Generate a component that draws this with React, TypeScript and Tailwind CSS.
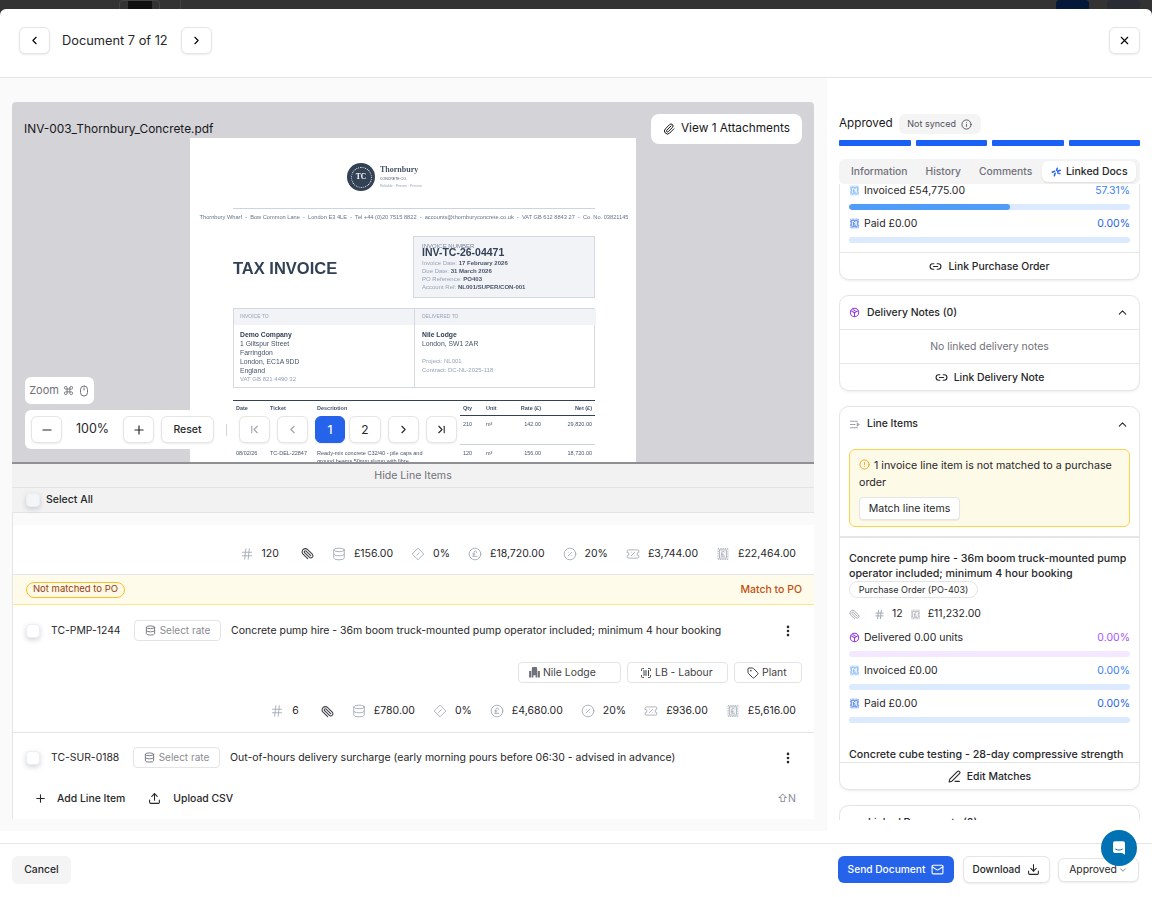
import React from 'react';
import {
  ChevronDown,
  ChevronFirst,
  ChevronLast,
  ChevronLeft,
  ChevronRight,
  ChevronUp,
  CircleAlert,
  CirclePercent,
  CirclePoundSterling,
  Command,
  Database,
  Download,
  EllipsisVertical,
  Hash,
  Info,
  Link2,
  Mail,
  Minus,
  Mouse,
  Paperclip,
  PenLine,
  Plus,
  ScanBarcode,
  Tag,
  TicketPercent,
  Upload,
  X,
} from 'lucide-react';

type IconProps = { className?: string };

// Stamp-edged invoice icon used for totals and invoiced/paid rows
const StampPound: React.FC<IconProps> = ({ className }) => (
  <svg viewBox="0 0 24 24" fill="none" stroke="currentColor" strokeWidth="1.7" className={className}>
    <rect x="3.5" y="2.5" width="17" height="19" strokeDasharray="1.6 1.4" fill="currentColor" fillOpacity="0.12" />
    <rect x="6" y="5" width="12" height="14" strokeWidth="1.2" />
    <path d="M14.5 9a2.3 2.3 0 0 0-4.4 0.6V15.5M8.8 12.5h4.2M8.8 15.8h6.4" strokeWidth="1.3" />
  </svg>
);

const RoundBox: React.FC<IconProps> = ({ className }) => (
  <svg viewBox="0 0 24 24" fill="none" stroke="currentColor" strokeWidth="2.200" className={className}>
    <circle cx="12" cy="12" r="9.2" />
    <path d="M12 12.5v8.7M12 12.5l7.8-4.6M12 12.5 4.2 7.900M7.800 5.200l8.200 4.900" />
  </svg>
);

const DiamondPct: React.FC<IconProps> = ({ className }) => (
  <svg viewBox="0 0 24 24" fill="none" stroke="currentColor" strokeWidth="1.6" className={className}>
    <path d="M12 2 22 12 12 22 2 12Z" strokeLinejoin="round" />
    <path d="M14.500 9.500l-5 5M9.700 9.700h.01M14.300 14.300h.01" />
  </svg>
);

const LinesArrow: React.FC<IconProps> = ({ className }) => (
  <svg viewBox="0 0 24 24" fill="none" stroke="currentColor" strokeWidth="2.200" className={className}>
    <path d="M2 5h17M2 12h12M2 19h17M18 9l4 3-4 3Z" />
  </svg>
);

const LinkedSpark: React.FC<IconProps> = ({ className }) => (
  <svg viewBox="0 0 24 24" fill="none" stroke="currentColor" strokeWidth="3.600" strokeLinecap="round" className={className}>
    <path d="M15 3l-1.500 5M22 8l-6 2M9 10l-6 2.500M10 15l-2 6M16 14l5 2" />
  </svg>
);

const BuildingFill: React.FC<IconProps> = ({ className }) => (
  <svg viewBox="0 0 24 24" fill="currentColor" className={className}>
    <path d="M8 2h8l1 3v16h-3v-4h-4v4H7V5ZM2 9h4v12H2ZM18 9h4v12h-4Z" />
  </svg>
);

const Btn: React.FC<{ className?: string; height?: string; tone?: string; children: React.ReactNode }> = ({
  className,
  height = 'h-[27px]',
  tone = 'border-[#e5e5e5] bg-white',
  children,
}) => (
  <div
    className={`flex items-center justify-center rounded-md border shadow-[0_1px_2px_rgba(0,0,0,0.08)] ${height} ${tone} ${className ?? ''}`}
  >
    {children}
  </div>
);

const Checkbox: React.FC<{ className?: string }> = ({ className }) => (
  <div
    className={`h-[14px] w-[14px] shrink-0 rounded-[4px] border border-[#eceef2] shadow-[0_2px_5px_rgba(100,116,139,0.3)] ${className ?? 'bg-white'}`}
  />
);

type StatItem = { icon: React.FC<IconProps>; text?: string };

const stats = (qty: string, rate: string, net: string, vat: string, gross: string): StatItem[] => [
  { icon: Hash, text: qty },
  { icon: Paperclip },
  { icon: Database, text: rate },
  { icon: DiamondPct, text: '0%' },
  { icon: CirclePoundSterling, text: net },
  { icon: CirclePercent, text: '20%' },
  { icon: TicketPercent, text: vat },
  { icon: StampPound, text: gross },
];

const StatRow: React.FC<{ items: StatItem[] }> = ({ items }) => (
  <div className="flex items-center justify-end gap-[18px] pr-[18px] text-[10.500px] text-[#27272a]">
    {items.map((item, i) => (
      <div key={i} className="flex items-center gap-[8px]">
        <item.icon
          className={
            item.icon === Paperclip
              ? 'ml-[4px] h-[13px] w-[13px] rotate-90 stroke-[2] text-[#3f3f46]'
              : 'h-[14px] w-[14px] stroke-[1.4] text-[#9ca3af]'
          }
        />
        {item.text && <span>{item.text}</span>}
      </div>
    ))}
  </div>
);

const SelectRate: React.FC = () => (
  <div className="flex h-[21px] w-[87px] shrink-0 items-center justify-center gap-[4px] rounded-[4px] border border-[#e4e4e7] text-[10px] text-[#8b8b93]">
    <Database className="h-[11px] w-[11px] text-[#71717a]" />
    Select rate
  </div>
);

const Chip: React.FC<{ className?: string; children: React.ReactNode }> = ({ className, children }) => (
  <div className={`flex h-[21px] items-center rounded-[4px] border border-[#e4e4e7] text-[10.400px] text-[#3f3f46] ${className ?? ''}`}>
    {children}
  </div>
);

const Progress: React.FC<{
  icon: React.ReactNode;
  label: string;
  pct: string;
  pctColor: string;
  track: string;
  fill?: React.ReactNode;
  last?: boolean;
}> = ({ icon, label, pct, pctColor, track, fill, last }) => (
  <div className={last ? '' : 'mb-[5px]'}>
    <div className="flex h-[16px] items-center pt-[1px] text-[10.500px] text-[#27272a]">
      {icon}
      <span className="ml-[4px]">{label}</span>
      <span className={`ml-auto ${pctColor}`}>{pct}</span>
    </div>
    <div className={`mt-[6px] h-[6px] overflow-hidden rounded-full ${track}`}>{fill}</div>
  </div>
);

const invoicedIcon = <StampPound className="h-[11px] w-[11px] text-[#60a5fa]" />;
const paidIcon = <StampPound className="h-[11px] w-[11px] text-[#2563eb]" />;

const CardFooterAction: React.FC<{ icon: React.ReactNode; label: string }> = ({ icon, label }) => (
  <div className="flex h-[27px] items-center justify-center gap-[6px] border-t border-[#e5e5e5] pt-[1px] text-[10.400px] font-medium text-[#27272a]">
    {icon}
    {label}
  </div>
);

const cardClass = 'rounded-[10px] border border-[#e5e5e5] bg-white shadow-[0_1px_3px_rgba(0,0,0,0.08)]';

// Invoice page rendered inside the viewer
const PdfPage: React.FC = () => (
  <div className="h-[324px] w-[446px] shrink-0 overflow-hidden bg-white pt-[25px] pr-[41px] pl-[43px] font-['Liberation_Sans',sans-serif] text-[#475569] blur-[0.25px]">
    <div className="flex h-[28px] pl-[114px]">
      <div className="flex h-[28px] w-[28px] items-center justify-center rounded-full bg-[#334155]">
        <div className="flex h-[21px] w-[21px] items-center justify-center rounded-full border border-dotted border-white font-['Liberation_Serif',serif] text-[7.500px] font-bold text-white">
          TC
        </div>
      </div>
      <div className="ml-[5px] pt-[2px]">
        <div className="font-['Liberation_Serif',serif] text-[8px] leading-[10px] font-bold text-[#475569]">Thornbury</div>
        <div className="mt-[2px] text-[3.500px] leading-[5px]">CONCRETE CO.</div>
        <div className="mt-[2px] text-[3.500px] leading-[5px] whitespace-nowrap text-[#94a3b8]">Reliable · Proven · Precise</div>
      </div>
    </div>
    <div className="mt-[17px] h-px bg-[#cbd5e1]" />
    <div className="-mx-[34px] mt-[5px] text-center text-[5.660px] leading-[7px] whitespace-nowrap text-[#64748b]">
      Thornbury Wharf &nbsp;-&nbsp; Bow Common Lane &nbsp;-&nbsp; London E3 4LE &nbsp;-&nbsp; Tel +44 (0)20 7515 8822 &nbsp;-&nbsp; accounts@thornburyconcrete.co.uk &nbsp;-&nbsp; VAT GB 612 8843 27 &nbsp;-&nbsp; Co. No. 03821145
    </div>
    <div className="mt-[15px] flex items-center justify-between">
      <div className="pt-[2px] text-[16.500px] font-bold text-[#334155]">TAX INVOICE</div>
      <div className="h-[62px] w-[182px] border border-[#d5dae2] bg-[#f1f3f7] px-[8px] pt-[6px] text-[6px] leading-[8px] text-[#94a3b8]">
        <div className="h-[4px] text-[6px] leading-[6px] text-[#7c8798]">INVOICE NUMBER</div>
        <div className="text-[10.500px] leading-[11px] font-bold text-[#334155]">INV-TC-26-04471</div>
        <div className="mt-[1px]">Invoice Date: <b className="text-[#475569]">17 February 2026</b></div>
        <div>Due Date: <b className="text-[#475569]">31 March 2026</b></div>
        <div>PO Reference: <b className="text-[#475569]">PO403</b></div>
        <div>Account Ref: <b className="text-[#475569]">NL001/SUPER/CON-001</b></div>
      </div>
    </div>
    <div className="mt-[10px] grid h-[80px] grid-cols-[181px_181px] border border-[#d5dae2] text-[6.800px] leading-[9px]">
      <div className="border-r border-[#d5dae2]">
        <div className="h-[16px] bg-[#f1f3f7] pt-[3px] pl-[6px] text-[5px] text-[#94a3b8]">INVOICE TO</div>
        <div className="px-[6px] pt-[5px]">
          <b className="text-[#334155]">Demo Company</b>
          <div>1 Giltspur Street</div>
          <div>Farringdon</div>
          <div>London, EC1A 9DD</div>
          <div>England</div>
          <div className="text-[6px] text-[#94a3b8]">VAT GB 821 4490 32</div>
        </div>
      </div>
      <div>
        <div className="h-[16px] bg-[#f1f3f7] pt-[3px] pl-[7px] text-[5px] text-[#94a3b8]">DELIVERED TO</div>
        <div className="px-[7px] pt-[5px]">
          <b className="text-[#334155]">Nile Lodge</b>
          <div>London, SW1 2AR</div>
          <div className="mt-[9px] text-[6px] text-[#94a3b8]">Project: NL001</div>
          <div className="text-[6px] text-[#94a3b8]">Contract: DC-NL-2025-118</div>
        </div>
      </div>
    </div>
    <div className="mt-[12px] border-t border-[#334155]">
      <div className="grid h-[15px] grid-cols-[34px_47px_146px_23px_25px_30px_51px] items-center border-b border-[#334155] pl-[3px] text-[5.500px] font-bold">
        <span>Date</span>
        <span>Ticket</span>
        <span>Description</span>
        <span>Qty</span>
        <span>Unit</span>
        <span className="text-right">Rate (£)</span>
        <span className="text-right">Net (£)</span>
      </div>
      <div className="grid h-[29px] grid-cols-[34px_47px_146px_23px_25px_30px_51px] border-b border-[#cbd5e1] pt-[4px] pl-[3px] text-[5.500px]">
        <span>07/02/26</span>
        <span>TC-DEL-22831</span>
        <span>Ready-mix concrete C32/40</span>
        <span>210</span>
        <span>m³</span>
        <span className="text-right">142.00</span>
        <span className="text-right">29,820.00</span>
      </div>
      <div className="grid grid-cols-[34px_47px_146px_23px_25px_30px_51px] pt-[4px] pl-[3px] text-[5.500px] leading-[8px]">
        <span>08/02/26</span>
        <span>TC-DEL-22847</span>
        <span className="pr-[26px]">Ready-mix concrete C32/40 - pile caps and ground beams 50mm slump with fibre</span>
        <span>120</span>
        <span>m³</span>
        <span className="text-right">156.00</span>
        <span className="text-right">18,720.00</span>
      </div>
    </div>
  </div>
);

const Viewer: React.FC = () => (
  <div className="relative flex h-[360px] w-[802px] justify-center overflow-hidden rounded-t-[4px] bg-[#d4d4d8] pt-[36px]">
    <PdfPage />
    <div className="absolute top-[18px] left-[12px] text-[11.900px] text-[#18181b]">INV-003_Thornbury_Concrete.pdf</div>
    <div className="absolute top-[12px] right-[12px] flex h-[30px] w-[151px] items-center justify-center gap-[6px] rounded-lg bg-white text-[11.850px] text-[#18181b]">
      <Paperclip className="h-[12px] w-[12px]" />
      View 1 Attachments
    </div>
    <div className="absolute top-[275px] left-[13px] flex h-[27px] w-[69px] items-center justify-center gap-[4px] rounded-md bg-white text-[11px] text-[#71717a]">
      Zoom
      <Command className="h-[11px] w-[11px]" />
      <Mouse className="h-[12px] w-[12px]" />
    </div>
    <div className="absolute top-[308px] left-[13px] flex h-[39px] w-[435px] items-center rounded-l-md bg-white pl-[6px] text-[#27272a]">
      <Btn className="w-[31px]"><Minus className="h-[14px] w-[14px]" /></Btn>
      <div className="w-[61px] text-center text-[12.500px]">100%</div>
      <Btn className="w-[31px]"><Plus className="h-[14px] w-[14px]" /></Btn>
      <Btn className="ml-[7px] w-[53px] text-[10.500px] font-medium">Reset</Btn>
      <div className="mx-[12px] h-[12px] w-px bg-[#d4d4d8]" />
      <Btn className="w-[31px] text-[#a1a1aa]"><ChevronFirst className="h-[13px] w-[13px]" /></Btn>
      <Btn className="ml-[7px] w-[31px] text-[#a1a1aa]"><ChevronLeft className="h-[13px] w-[13px]" /></Btn>
      <Btn className="ml-[7px] w-[30px] text-[12px] font-medium text-white" tone="border-[#2563eb] bg-[#2563eb]">1</Btn>
      <Btn className="ml-[4px] w-[32px] text-[12px]">2</Btn>
      <Btn className="ml-[7px] w-[31px]"><ChevronRight className="h-[13px] w-[13px]" /></Btn>
      <Btn className="ml-[7px] w-[31px]"><ChevronLast className="h-[13px] w-[13px]" /></Btn>
    </div>
  </div>
);

const LineItemsPanel: React.FC = () => (
  <div className="w-[802px]">
    <div className="h-[2px] bg-[#8f8f94]" />
    <div className="flex h-[24px] items-center justify-center border-b border-[#e4e4e7] bg-[#f2f2f2] pt-[1px] text-[10.600px] text-[#71717a]">
      Hide Line Items
    </div>
    <div className="flex h-[25px] items-center gap-[6px] border-b border-[#e4e4e7] bg-[#f2f2f2] pl-[14px] text-[10.500px] font-medium text-[#27272a]">
      <Checkbox className="bg-[#f4f5f7]" />
      Select All
    </div>
    <div className="h-[306px] overflow-hidden border-l border-[#e5e5e5] bg-white">
      <div className="h-[12px] bg-[#fafafa]" />
      <div className="flex h-[50px] items-center border-b border-[#e4e4e7] pt-[8px]">
        <div className="w-full"><StatRow items={stats('120', '£156.00', '£18,720.00', '£3,744.00', '£22,464.00')} /></div>
      </div>
      <div className="flex h-[30px] items-center justify-between border-b border-[#fde68a] bg-[#fffbeb] pr-[12px] pl-[13px]">
        <div className="flex h-[16px] w-[99px] items-center justify-center rounded-full border border-[#fbbf24] bg-[#fef9e7] text-[9.500px] text-[#92400e]">
          Not matched to PO
        </div>
        <div className="text-[10.500px] font-medium text-[#c2500c]">Match to PO</div>
      </div>
      <div className="border-b border-[#e4e4e7] pt-[15px]">
        <div className="flex h-[21px] items-center pr-[19px] pl-[13px] text-[10.400px] text-[#27272a]">
          <Checkbox />
          <span className="mr-[14px] ml-[11px] w-[69px] whitespace-nowrap">TC-PMP-1244</span>
          <SelectRate />
          <span className="ml-[10px] text-[10.500px]">Concrete pump hire - 36m boom truck-mounted pump operator included; minimum 4 hour booking</span>
          <EllipsisVertical className="ml-auto h-[14px] w-[14px] stroke-[2.500]" />
        </div>
        <div className="mt-[21px] flex justify-end gap-[6px] pr-[12px]">
          <Chip className="w-[103px] pl-[9px]"><BuildingFill className="mr-[2px] h-[13px] w-[13px] text-[#71717a]" />Nile Lodge</Chip>
          <Chip className="w-[101px] pl-[12px]"><ScanBarcode className="mr-[3px] h-[12px] w-[12px]" />LB - Labour</Chip>
          <Chip className="w-[68px] pl-[12px]"><Tag className="mr-[3px] h-[12px] w-[12px]" />Plant</Chip>
        </div>
        <div className="flex h-[49px] items-center pt-[7px]">
          <div className="w-full"><StatRow items={stats('6', '£780.00', '£4,680.00', '£936.00', '£5,616.00')} /></div>
        </div>
      </div>
      <div className="mt-[14px] flex h-[21px] items-center pr-[19px] pl-[13px] text-[10.400px] text-[#27272a]">
        <Checkbox />
        <span className="mr-[14px] ml-[11px] w-[68px] whitespace-nowrap">TC-SUR-0188</span>
        <SelectRate />
        <span className="ml-[10px] text-[10.500px]">Out-of-hours delivery surcharge (early morning pours before 06:30 - advised in advance)</span>
        <EllipsisVertical className="ml-auto h-[14px] w-[14px] stroke-[2.500]" />
      </div>
      <div className="mt-[23px] flex items-center pr-[18px] pl-[21px] text-[10.400px] font-medium text-[#27272a]">
        <Plus className="h-[13px] w-[13px]" />
        <span className="ml-[10px]">Add Line Item</span>
        <Upload className="ml-[23px] h-[13px] w-[13px]" />
        <span className="ml-[12px]">Upload CSV</span>
        <span className="ml-auto text-[10.500px] font-normal text-[#8b8b93]">⇧N</span>
      </div>
    </div>
  </div>
);

const SidePanel: React.FC = () => (
  <div className="w-[325px] min-w-0 shrink-0 bg-white px-[12px] pt-[36px]">
    <div className="flex h-[20px] items-center">
      <span className="text-[11.700px] text-[#18181b]">Approved</span>
      <div className="ml-[6px] flex h-[20px] w-[82px] items-center justify-center gap-[5px] rounded-md bg-[#f4f4f5] text-[9px] text-[#52525b]">
        Not synced
        <Info className="h-[11px] w-[11px]" />
      </div>
    </div>
    <div className="mt-[6px] grid grid-cols-4 gap-[5px]">
      <div className="h-[6px] rounded-[1px] bg-[#1a60f5]" />
      <div className="h-[6px] rounded-[1px] bg-[#1a60f5]" />
      <div className="h-[6px] rounded-[1px] bg-[#1a60f5]" />
      <div className="h-[6px] rounded-[1px] bg-[#1a60f5]" />
    </div>
    <div className="mt-[13px] flex h-[25px] items-center rounded-md bg-[#f4f4f5] pl-[12px] text-[10.300px] font-medium text-[#71717a]">
      <span>Information</span>
      <span className="ml-[18px]">History</span>
      <span className="ml-[18px]">Comments</span>
      <div className="ml-[10px] flex h-[21px] w-[94px] items-center justify-center gap-[5px] rounded-md bg-white text-[10.500px] text-[#27272a] shadow-[0_1px_2px_rgba(0,0,0,0.1)]">
        <LinkedSpark className="h-[10px] w-[10px] text-[#2563eb]" />
        Linked Docs
      </div>
    </div>
    <div className="h-[636px] overflow-hidden">
      {/* Purchase order card, scrolled partly out of view */}
      <div className={`-mt-[10px] pt-[7px] ${cardClass}`}>
        <div className="px-[9px]">
          <Progress
            icon={invoicedIcon}
            label="Invoiced £54,775.00"
            pct="57.31%"
            pctColor="text-[#3b82f6]"
            track="bg-[#dbeafe]"
            fill={<div className="h-full w-[57.31%] rounded-full bg-[#4f9cf9]" />}
          />
          <Progress icon={paidIcon} label="Paid £0.00" pct="0.00%" pctColor="text-[#2563eb]" track="bg-[#dbeafe]" last />
        </div>
        <div className="mt-[9px]">
          <CardFooterAction icon={<Link2 className="h-[13px] w-[13px]" />} label="Link Purchase Order" />
        </div>
      </div>

      <div className={`mt-[15px] ${cardClass}`}>
        <div className="flex h-[34px] items-center border-b border-[#e5e5e5] pr-[10px] pl-[9px] text-[10.400px] font-medium text-[#27272a]">
          <RoundBox className="h-[11px] w-[11px] text-[#9333ea]" />
          <span className="ml-[7px]">Delivery Notes (0)</span>
          <ChevronUp className="ml-auto h-[13px] w-[13px]" />
        </div>
        <div className="flex h-[33px] items-center justify-center text-[10.450px] text-[#71717a]">No linked delivery notes</div>
        <CardFooterAction icon={<Link2 className="h-[13px] w-[13px]" />} label="Link Delivery Note" />
      </div>

      <div className={`mt-[15px] ${cardClass}`}>
        <div className="flex h-[34px] items-center pr-[10px] pl-[9px] text-[10.400px] font-medium text-[#27272a]">
          <LinesArrow className="h-[11px] w-[11px] text-[#a1a1aa]" />
          <span className="ml-[7px]">Line Items</span>
          <ChevronUp className="ml-auto h-[13px] w-[13px]" />
        </div>
        <div className="h-[321px] overflow-hidden">
          <div className="mx-[9px] mt-[8px] h-[78px] rounded-md border border-[#fcd34d] bg-[#fefae8] px-[9px] pt-[7px] text-[10.700px] leading-[17px] text-[#27272a]">
            <CircleAlert className="mr-[4px] inline h-[11px] w-[11px] align-[-1px] text-[#f59e0b]" />
            1 invoice line item is not matched to a purchase order
            <div className="mt-[6px] flex h-[23px] w-[101px] items-center justify-center rounded-[4px] border border-[#e5e5e5] bg-white text-[10.600px] shadow-[0_1px_1px_rgba(0,0,0,0.06)]">
              Match line items
            </div>
          </div>
          <div className="mt-[9px] h-[2px] bg-[#e5e5e5]" />
          <div className="px-[9px] pt-[13px]">
            <div className="text-[10.700px] leading-[15px] font-medium text-[#27272a]">
              Concrete pump hire - 36m boom truck-mounted pump operator included; minimum 4 hour booking
            </div>
            <div className="flex h-[17px] w-[129px] items-center justify-center rounded-full border border-[#e4e4e7] text-[9px] text-[#27272a]">
              Purchase Order (PO-403)
            </div>
            <div className="mt-[8px] flex h-[16px] items-center text-[10.500px] text-[#27272a]">
              <Paperclip className="h-[11px] w-[11px] rotate-90 text-[#a1a1aa]" />
              <Hash className="ml-[14px] h-[11px] w-[11px] text-[#9ca3af]" />
              <span className="ml-[7px]">12</span>
              <StampPound className="ml-[7px] h-[11px] w-[11px] text-[#a1a1aa]" />
              <span className="ml-[7px]">£11,232.00</span>
            </div>
            <div className="mt-[7px]">
              <Progress
                icon={<RoundBox className="h-[11px] w-[11px] text-[#9333ea]" />}
                label="Delivered 0.00 units"
                pct="0.00%"
                pctColor="text-[#a855f7]"
                track="bg-[#f3e8ff]"
              />
              <Progress icon={invoicedIcon} label="Invoiced £0.00" pct="0.00%" pctColor="text-[#3b82f6]" track="bg-[#dbeafe]" />
              <Progress icon={paidIcon} label="Paid £0.00" pct="0.00%" pctColor="text-[#2563eb]" track="bg-[#dbeafe]" last />
            </div>
            <div className="mt-[24px] text-[10.700px] leading-[15px] font-medium whitespace-nowrap text-[#27272a]">
              Concrete cube testing - 28-day compressive strength
            </div>
          </div>
        </div>
        <CardFooterAction icon={<PenLine className="h-[13px] w-[13px]" />} label="Edit Matches" />
      </div>

      <div className={`mt-[15px] ${cardClass}`}>
        <div className="flex h-[34px] items-center pl-[28px] text-[10.400px] font-medium text-[#27272a]">Linked Documents (0)</div>
      </div>
    </div>
  </div>
);

const TopStrip: React.FC = () => (
  <div className="flex h-[9px] shrink-0 overflow-hidden">
    <div className="ml-[119px] h-[9px] w-[41px] rounded-t border border-b-0 border-[#444] pl-[8px]">
      <div className="h-[9px] w-[24px] bg-[#111]" />
    </div>
    <div className="ml-[20px] h-[9px] w-px bg-[#444]" />
    <div className="ml-[875px] h-[9px] w-[33px] rounded-t-sm bg-[#04183a]" />
    <div className="ml-[18px] h-[9px] w-[33px] rounded-t-sm bg-[#2a2c33]" />
  </div>
);

export default function App() {
  return (
    <div className="relative flex h-[897px] flex-col overflow-hidden bg-[#333333] font-['Inter',sans-serif]">
      <TopStrip />
      <div className="flex flex-1 flex-col overflow-hidden rounded-t-md bg-white">
        <div className="flex h-[69px] shrink-0 items-center border-b border-[#e5e5e5] px-[19px] pb-[5px]">
          <Btn className="w-[31px]"><ChevronLeft className="h-[13px] w-[13px]" /></Btn>
          <span className="ml-[12px] text-[12.800px] text-[#27272a]">Document 7 of 12</span>
          <Btn className="ml-[13px] w-[31px]"><ChevronRight className="h-[13px] w-[13px]" /></Btn>
          <Btn className="ml-auto mr-[-7px] w-[31px]"><X className="h-[13px] w-[13px]" /></Btn>
        </div>
        <div className="flex h-[765px] shrink-0">
          <div className="h-[753px] w-[827px] shrink-0 bg-[#fafafa] pt-[24px] pl-[12px]">
            <Viewer />
            <LineItemsPanel />
          </div>
          <SidePanel />
        </div>
        <div className="flex flex-1 items-center border-t border-[#e5e5e5] pr-[13px] pb-[2px] pl-[12px] text-[10.400px] font-medium text-[#27272a]">
          <div className="flex h-[28px] w-[59px] items-center justify-center rounded-md bg-[#f4f4f5]">Cancel</div>
          <div className="ml-auto flex h-[27px] w-[116px] items-center justify-center gap-[6px] rounded-md bg-[#2563eb] text-[10.200px] text-white">
            Send Document
            <Mail className="h-[13px] w-[13px]" />
          </div>
          <Btn className="ml-[9px] w-[87px] gap-[7px] text-[10px]">Download<Download className="h-[13px] w-[13px]" /></Btn>
          <Btn className="ml-[8px] w-[81px] gap-[1px] font-normal" height="h-[24px]">Approved<ChevronDown className="h-[10px] w-[10px] text-[#71717a]" /></Btn>
        </div>
      </div>
      <div className="absolute right-[15px] bottom-[31px] flex h-[36px] w-[36px] items-center justify-center rounded-full bg-[#0071b2]">
        <svg viewBox="0 0 24 24" className="h-[18px] w-[18px]">
          <path d="M4 5.500A2.500 2.500 0 0 1 6.500 3h11A2.500 2.500 0 0 1 20 5.500V21l-4-2.500H6.500A2.500 2.500 0 0 1 4 16Z" fill="white" />
          <path d="M7.500 13.500c3 1.800 6 1.800 9 0" fill="none" stroke="#0071b2" strokeWidth="1.300" strokeLinecap="round" />
        </svg>
      </div>
    </div>
  );
}
